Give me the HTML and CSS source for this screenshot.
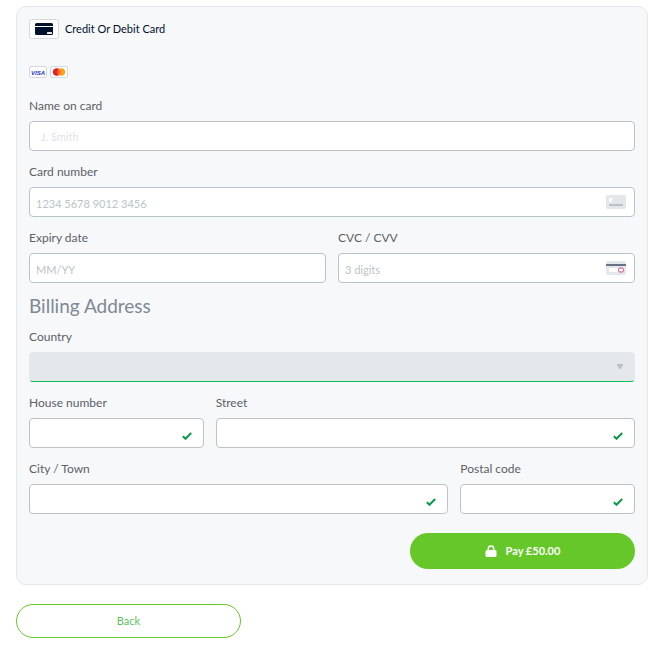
FILE: index.html
```html
<!DOCTYPE html>
<html lang="en">
<head>
<meta charset="utf-8">
<title>Payment</title>
<link rel="stylesheet" href="styles.css">
</head>
<body>
<form class="checkout">
  <section class="panel">
    <div class="method">
      <svg class="method-icon" viewBox="0 0 30 20" aria-hidden="true">
        <rect x=".5" y=".5" width="29" height="19" rx="2" fill="#fff" stroke="#d5d9dd"/>
        <path d="M6 7V5.500Q6 4 7.500 4h15Q24 4 24 5.500V7ZM6 8h18v6.500q0 1.500-1.500 1.500h-15Q6 16 6 14.500Z" fill="#00112c"/>
        <rect x="18" y="13" width="5" height="2" rx=".5" fill="#e6eaee"/>
      </svg>
      <span>Credit Or Debit Card</span>
    </div>
    <div class="brands">
      <svg class="brand" viewBox="0 0 18 12" role="img" aria-label="Visa">
        <rect x=".5" y=".5" width="17" height="11" rx="1.500" fill="#fff" stroke="#d5d9dd"/>
        <text class="visa" x="9" y="8.500" text-anchor="middle">VISA</text>
      </svg>
      <svg class="brand" viewBox="0 0 18 12" role="img" aria-label="Mastercard">
        <rect x=".5" y=".5" width="17" height="11" rx="1.500" fill="#fff" stroke="#d5d9dd"/>
        <circle cx="6.700" cy="6" r="3.800" fill="#eb1c26"/>
        <circle cx="11.300" cy="6" r="3.800" fill="#f99f1b"/>
        <path d="M9 3a3.800 3.800 0 0 1 0 6 3.800 3.800 0 0 1 0-6" fill="#f26322"/>
      </svg>
    </div>

    <div class="fields">
      <div class="field">
        <label for="name">Name on card</label>
        <div class="control"><input class="name-input" id="name" type="text" placeholder="J. Smith"></div>
      </div>
      <div class="field">
        <label for="number">Card number</label>
        <div class="control secure">
          <input id="number" type="text" inputmode="numeric" placeholder="1234 5678 9012 3456">
          <svg class="card-hint" viewBox="0 0 20 14" aria-hidden="true">
            <rect width="20" height="14" rx="2" fill="#e3e7ea"/>
            <rect x="3" y="3" width="3" height="4" rx="1" fill="#fff"/>
            <rect x="3" y="9" width="14" height="2" fill="#b9c4c9"/>
          </svg>
        </div>
      </div>
      <div class="row halves">
        <div class="field">
          <label for="expiry">Expiry date</label>
          <div class="control secure"><input id="expiry" type="text" placeholder="MM/YY"></div>
        </div>
        <div class="field">
          <label for="cvc">CVC / CVV</label>
          <div class="control secure">
            <input id="cvc" type="text" inputmode="numeric" placeholder="3 digits">
            <svg class="card-hint" viewBox="0 0 20 14" aria-hidden="true">
              <rect width="20" height="14" rx="2" fill="#e3e7ea"/>
              <rect y="3" width="20" height="2" fill="#687282"/>
              <rect x="3" y="7" width="9" height="4" fill="#fff"/>
              <rect x="12.500" y="7" width="5" height="4" rx="1.500" fill="#fff" stroke="#d94b79"/>
            </svg>
          </div>
        </div>
      </div>
    </div>

    <h2>Billing Address</h2>

    <div class="fields">
      <div class="field">
        <label for="country">Country</label>
        <div class="control">
          <select id="country" disabled><option></option></select>
          <svg class="arrow" viewBox="0 0 6 5" aria-hidden="true"><path d="M0 0h6v1.500L3.500 5h-1L0 1.500Z" fill="#b9c4c9"/></svg>
        </div>
      </div>
      <div class="row narrow-wide">
        <div class="field">
          <label for="house">House number</label>
          <div class="control">
            <input id="house" type="text">
            <svg class="tick" viewBox="0 0 10 8" aria-hidden="true"><path d="m.8 4.300 2.700 2.500L9.200 1" fill="none" stroke="#0a9b48" stroke-width="2"/></svg>
          </div>
        </div>
        <div class="field">
          <label for="street">Street</label>
          <div class="control">
            <input id="street" type="text">
            <svg class="tick" viewBox="0 0 10 8" aria-hidden="true"><path d="m.8 4.300 2.700 2.500L9.200 1" fill="none" stroke="#0a9b48" stroke-width="2"/></svg>
          </div>
        </div>
      </div>
      <div class="row wide-narrow">
        <div class="field">
          <label for="city">City / Town</label>
          <div class="control">
            <input id="city" type="text">
            <svg class="tick" viewBox="0 0 10 8" aria-hidden="true"><path d="m.8 4.300 2.700 2.500L9.200 1" fill="none" stroke="#0a9b48" stroke-width="2"/></svg>
          </div>
        </div>
        <div class="field">
          <label for="postcode">Postal code</label>
          <div class="control">
            <input id="postcode" type="text">
            <svg class="tick" viewBox="0 0 10 8" aria-hidden="true"><path d="m.8 4.300 2.700 2.500L9.200 1" fill="none" stroke="#0a9b48" stroke-width="2"/></svg>
          </div>
        </div>
      </div>
    </div>

    <button class="button pay" type="submit">
      <svg class="lock" viewBox="0 0 12 12" aria-hidden="true">
        <path d="M3.300 5V3.700a2.700 2.700 0 0 1 5.400 0V5" fill="none" stroke="#fff" stroke-width="1.500"/>
        <rect x=".5" y="5" width="11" height="7" rx="1.500" fill="#fff"/>
      </svg>
      <span>Pay £50.00</span>
    </button>
  </section>
  <button class="button back" type="button">Back</button>
</form>
</body>
</html>
```
FILE: styles.css
```css
* {
  box-sizing: border-box;
}

body {
  margin: 0;
  background: #fff;
  color: #00112c;
  font: 11px/20px Lato, "Liberation Sans", sans-serif;
}

.checkout {
  padding: 6px 12px 18px 16px;
}

.panel {
  display: flex;
  flex-direction: column;
  padding: 12px 12px 15px;
  border: 1px solid #e4e8eb;
  border-radius: 10px;
  background: #f7f8fa;
}

.method {
  display: flex;
  align-items: center;
  gap: 6px;
}

.method-icon {
  width: 30px;
  height: 20px;
}

.brands {
  display: flex;
  gap: 3px;
  margin: 27px 0 18px;
}

.brand {
  width: 18px;
  height: 12px;
}

.visa {
  fill: #1a32c8;
  font: italic 700 6px "Liberation Sans", sans-serif;
}

.fields {
  display: grid;
  gap: 11px;
}

.row {
  display: grid;
  gap: 12px;
}

.halves {
  grid-template-columns: 1fr 1fr;
}

.narrow-wide {
  grid-template-columns: 5fr 12fr;
}

.wide-narrow {
  grid-template-columns: 12fr 5fr;
}

.field {
  display: grid;
  gap: 5px;
}

label {
  color: #5c6167;
  font-size: 12px;
}

.control {
  position: relative;
}

input,
select {
  display: block;
  width: 100%;
  height: 30px;
  margin: 0;
  border: 1px solid #bfc2c4;
  border-radius: 4px;
  background: #fff;
  color: #00112c;
  font: inherit;
}

input {
  padding: 3px 30px 0 6px;
}

.name-input {
  padding: 0 11px;
}

.secure input {
  border-color: #b9c4c9;
}

input::placeholder {
  color: #b9c4c9;
  opacity: 1;
}

.name-input::placeholder {
  color: #dde3e6;
}

select {
  appearance: none;
  padding: 0 30px 0 6px;
  border-color: #e4e8eb;
  border-bottom-color: #0abf53;
  background: #e4e8eb;
  opacity: 1;
}

.card-hint,
.arrow,
.tick {
  position: absolute;
  pointer-events: none;
}

.card-hint {
  top: 8px;
  right: 9px;
  width: 20px;
  height: 14px;
}

.arrow {
  top: 12px;
  right: 12px;
  width: 6px;
  height: 5px;
}

.tick {
  top: 14px;
  right: 12px;
  width: 10px;
  height: 8px;
}

h2 {
  margin: 11px 0 9px;
  color: #7f8994;
  font-size: 19px;
  font-weight: 400;
  line-height: 24px;
}

.button {
  display: flex;
  align-items: center;
  justify-content: center;
  width: 225px;
  padding: 0;
  border-radius: 18px;
  font: inherit;
  cursor: pointer;
}

.pay {
  align-self: flex-end;
  gap: 9px;
  height: 36px;
  margin-top: 19px;
  border: 0;
  background: #66c828;
  color: #fff;
  font-weight: 700;
}

.lock {
  width: 12px;
  height: 12px;
}

.back {
  height: 34px;
  margin-top: 19px;
  border: 1px solid #66c828;
  background: #fff;
  color: #5cc15c;
}
```
